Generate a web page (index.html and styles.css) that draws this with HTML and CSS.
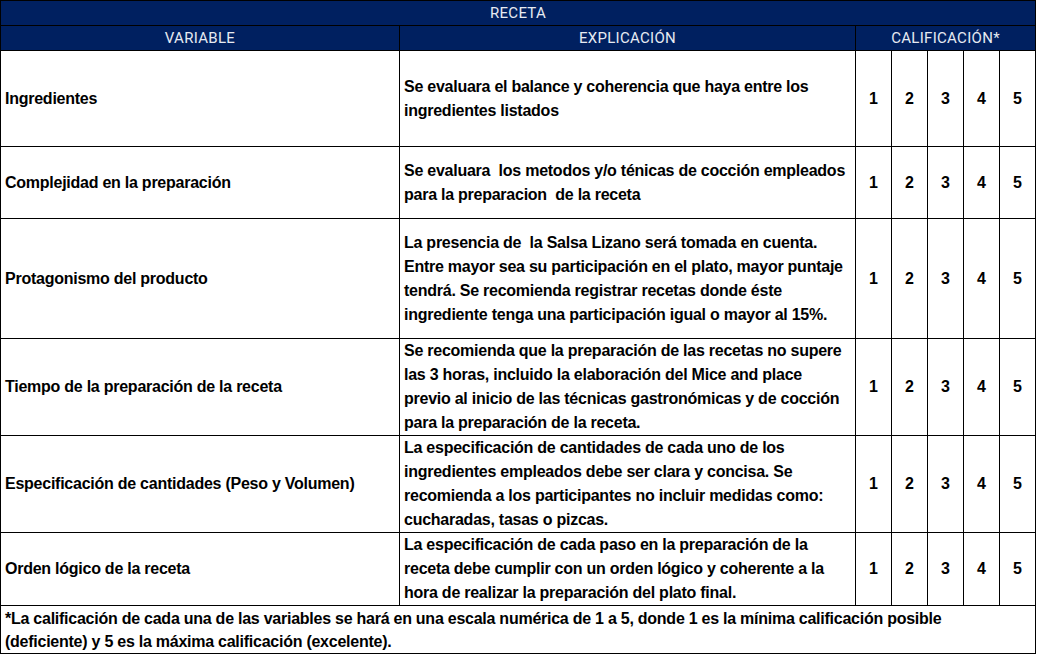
FILE: index.html
```html
<!DOCTYPE html>
<html lang="es">
<head>
<meta charset="utf-8">
<title>Receta</title>
<link rel="stylesheet" href="styles.css">
</head>
<body>
<table class="rubric">
  <colgroup>
    <col class="c-var"><col class="c-exp"><col class="c-n"><col class="c-n"><col class="c-n"><col class="c-n"><col class="c-n">
  </colgroup>
  <thead>
    <tr class="h1"><th colspan="7">RECETA</th></tr>
    <tr class="h2"><th>VARIABLE</th><th>EXPLICACIÓN</th><th colspan="5">CALIFICACIÓN*</th></tr>
  </thead>
  <tbody>
    <tr class="r4">
      <td class="var">Ingredientes</td>
      <td class="exp">Se evaluara el balance y coherencia que haya entre los<br>ingredientes listados</td>
      <td class="n">1</td><td class="n">2</td><td class="n">3</td><td class="n">4</td><td class="n">5</td>
    </tr>
    <tr class="r3">
      <td class="var">Complejidad en la preparación</td>
      <td class="exp">Se evaluara&nbsp; los metodos y/o ténicas de cocción empleados<br>para la preparacion&nbsp; de la receta</td>
      <td class="n">1</td><td class="n">2</td><td class="n">3</td><td class="n">4</td><td class="n">5</td>
    </tr>
    <tr class="r5">
      <td class="var">Protagonismo del producto</td>
      <td class="exp">La presencia de&nbsp; la Salsa Lizano será tomada en cuenta.<br>Entre mayor sea su participación en el plato, mayor puntaje<br>tendrá. Se recomienda registrar recetas donde éste<br>ingrediente tenga una participación igual o mayor al 15%.</td>
      <td class="n">1</td><td class="n">2</td><td class="n">3</td><td class="n">4</td><td class="n">5</td>
    </tr>
    <tr class="r4">
      <td class="var">Tiempo de la preparación de la receta</td>
      <td class="exp">Se recomienda que la preparación de las recetas no supere<br>las 3 horas, incluido la elaboración del Mice and place<br>previo al inicio de las técnicas gastronómicas y de cocción<br>para la preparación de la receta.</td>
      <td class="n">1</td><td class="n">2</td><td class="n">3</td><td class="n">4</td><td class="n">5</td>
    </tr>
    <tr class="r4">
      <td class="var">Especificación de cantidades (Peso y Volumen)</td>
      <td class="exp">La especificación de cantidades de cada uno de los<br>ingredientes empleados debe ser clara y concisa. Se<br>recomienda a los participantes no incluir medidas como:<br>cucharadas, tasas o pizcas.</td>
      <td class="n">1</td><td class="n">2</td><td class="n">3</td><td class="n">4</td><td class="n">5</td>
    </tr>
    <tr class="r3b">
      <td class="var">Orden lógico de la receta</td>
      <td class="exp">La especificación de cada paso en la preparación de la<br>receta debe cumplir con un orden lógico y coherente a la<br>hora de realizar la preparación del plato final.</td>
      <td class="n">1</td><td class="n">2</td><td class="n">3</td><td class="n">4</td><td class="n">5</td>
    </tr>
    <tr class="foot">
      <td colspan="7">*La calificación de cada una de las variables se hará en una escala numérica de 1 a 5, donde 1 es la mínima calificación posible<br>(deficiente) y 5 es la máxima calificación (excelente).</td>
    </tr>
  </tbody>
</table>
</body>
</html>
```
FILE: styles.css
```css
html, body {
  margin: 0;
  padding: 0;
  background: #ffffff;
}

.rubric {
  border-collapse: collapse;
  table-layout: fixed;
  width: 1036px;
  font-family: "Liberation Sans", Arial, sans-serif;
  font-size: 16px;
  color: #000000;
}

.c-var { width: 399px; }
.c-exp { width: 456px; }
.c-n { width: 36px; }

.rubric th,
.rubric td {
  border: 1px solid #000000;
  padding: 0 0 0 4px;
  white-space: nowrap;
  overflow: hidden;
}

.rubric th {
  background: #002060;
  color: #e6eaf2;
  font-family: Roboto, "Liberation Sans", sans-serif;
  font-weight: 400;
  font-size: 15px;
  line-height: 18px;
  text-align: center;
  padding: 0;
  letter-spacing: 0.3px;
}

.h1 { height: 25px; }
.h2 { height: 25px; }

.rubric td {
  font-weight: 700;
  line-height: 24px;
  vertical-align: middle;
  letter-spacing: -0.25px;
}

.r4 { height: 96px; }
.r3 { height: 72px; }
.r5 { height: 120px; }
.r3b { height: 72px; }
.foot { height: 46px; }

.foot td {
  line-height: 23px;
  padding-top: 1px;
}

.rubric td.n {
  text-align: center;
  padding: 0;
  letter-spacing: 0;
  font-size: 16px;
}
```
